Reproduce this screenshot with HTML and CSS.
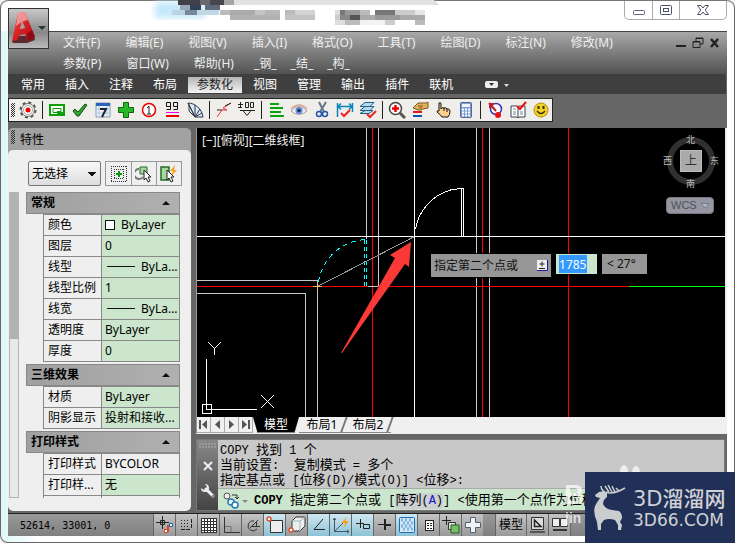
FILE: index.html
```html
<!DOCTYPE html>
<html lang="zh-CN">
<head>
<meta charset="utf-8">
<title>CAD</title>
<link rel="stylesheet" href="styles.css">
</head>
<body>
<div class="window">
  <header class="titlebar">
    <svg class="title-art" width="440" height="31" aria-hidden="true">
      <defs><filter id="soft"><feGaussianBlur stdDeviation="3"/></filter></defs>
      <rect x="155" y="2" width="50" height="16" fill="#c5e9fb" filter="url(#soft)"/>
      <rect x="178" y="0" width="256" height="5" fill="#e2e2e2"/>
      <path d="M434 0l5 5h-5z" fill="#ddd"/>
      <rect x="178" y="0" width="22" height="5" fill="#3f4048"/><rect x="200" y="0" width="10" height="5" fill="#68686e"/><rect x="210" y="0" width="14" height="5" fill="#47474d"/><rect x="224" y="0" width="10" height="5" fill="#a3a5a7"/>
      <rect x="180" y="5" width="10" height="5" fill="#9aa9b8"/><rect x="190" y="5" width="11" height="5" fill="#2f4057"/><rect x="205" y="5" width="15" height="5" fill="#5e6b7a"/>
      <rect x="172" y="10" width="13" height="5" fill="#bed3e2"/><rect x="185" y="10" width="12" height="5" fill="#77889b"/><rect x="197" y="10" width="22" height="5" fill="#c0d8e5"/>
      <rect x="220" y="10" width="10" height="5" fill="#bbb"/><rect x="230" y="10" width="25" height="5" fill="#aaa"/><rect x="255" y="10" width="10" height="5" fill="#c4c4c4"/><rect x="265" y="10" width="15" height="5" fill="#b7b7b7"/><rect x="285" y="10" width="10" height="5" fill="#bbb"/><rect x="295" y="10" width="20" height="5" fill="#d3d3d3"/>
      <rect x="230" y="15" width="50" height="5" fill="#b2b2b2"/><rect x="285" y="15" width="30" height="5" fill="#c3c3c3"/>
      <rect x="335" y="10" width="5" height="5" fill="#ddd"/><rect x="340" y="10" width="5" height="5" fill="#777"/><rect x="345" y="10" width="15" height="5" fill="#989898"/><rect x="360" y="10" width="10" height="5" fill="#bbb"/><rect x="375" y="10" width="20" height="5" fill="#777"/><rect x="395" y="10" width="20" height="5" fill="#ccc"/><rect x="415" y="10" width="10" height="5" fill="#e5e5e5"/>
      <rect x="335" y="15" width="5" height="5" fill="#ccc"/><rect x="340" y="15" width="10" height="5" fill="#888"/><rect x="350" y="15" width="10" height="5" fill="#555"/><rect x="360" y="15" width="15" height="5" fill="#aaa"/><rect x="375" y="15" width="25" height="5" fill="#999"/><rect x="400" y="15" width="25" height="5" fill="#aaa"/>
      <rect x="335" y="20" width="10" height="5" fill="#ddd"/><rect x="345" y="20" width="15" height="5" fill="#bbb"/><rect x="360" y="20" width="25" height="5" fill="#f3f3f3"/><rect x="385" y="20" width="10" height="5" fill="#ccc"/><rect x="415" y="20" width="10" height="5" fill="#bbb"/>
    </svg>
    <div class="win-controls">
      <button aria-label="最小化"><svg width="12" height="12"><rect x=".5" y="6.500" width="11" height="4" rx="1" fill="#fff" stroke="#5d6379"/></svg></button>
      <button aria-label="还原"><svg width="12" height="12"><rect x=".5" y="1.500" width="11" height="9" rx="1" fill="#fff" stroke="#4d5268"/><rect x="3.500" y="4.500" width="5" height="3" fill="#fff" stroke="#4d5268"/></svg></button>
      <button class="wide" aria-label="关闭"><svg width="12" height="12"><path d="M.5 1.500h3.500l2 2.500 2-2.500h3.500L8.200 6l3.300 4.500H8L6 8l-2 2.500H.5L3.800 6z" fill="#fff" stroke="#4d5268"/></svg></button>
    </div>
  </header>

  <button class="app-button" aria-label="应用程序菜单">
    <svg width="39" height="39">
      <defs>
        <linearGradient id="ared" x1="0" y1="0" x2="1" y2="1"><stop offset="0" stop-color="#f0605c"/><stop offset=".45" stop-color="#dd2328"/><stop offset="1" stop-color="#a30c14"/></linearGradient>
      </defs>
      <path d="M3 32l5-5 17 0 1 4-8 3-14 0z" fill="#4b0c10" opacity=".8"/>
      <path fill-rule="evenodd" d="M9 4l7-1 10 25-7 4-3-7-5 1-3 5-5 1zM13 12l-2 8 5-1z" fill="url(#ared)"/>
      <path d="M9 4l7-1 3 8q-6 1-12 6z" fill="#f5aaa6" opacity=".8"/>
      <path d="M13 12l-2 8 5-1z" fill="#a8a0a0"/>
      <path d="M19 32l7-4-3-7-5 4z" fill="#8f0a12"/>
      <path d="M29 17h8l-4 4z" fill="#2d3440"/>
    </svg>
  </button>

  <div class="app">
    <nav class="menubar">
      <div class="menus">
        <div class="menu-row"><button>文件(F)</button><button>编辑(E)</button><button>视图(V)</button><button>插入(I)</button><button>格式(O)</button><button>工具(T)</button><button>绘图(D)</button><button>标注(N)</button><button>修改(M)</button></div>
        <div class="menu-row"><button>参数(P)</button><button>窗口(W)</button><button>帮助(H)</button><div class="custom"><button>_钢_</button><button>_结_</button><button>_构_</button></div></div>
      </div>
      <div class="doc-controls">
        <button aria-label="最小化文档"><svg width="12" height="12"><path d="M1 9h10" stroke="#222" stroke-width="2"/></svg></button>
        <button aria-label="还原文档"><svg width="12" height="12"><path d="M4 4V1h7v6H8M1 4.500h7v6H1z" fill="none" stroke="#222" stroke-width="1"/><path d="M4 1.500h7M1 5h7" stroke="#222"/></svg></button>
        <button aria-label="关闭文档"><svg width="12" height="12"><path d="M2 2l7 8M9 2l-7 8" stroke="#222" stroke-width="2.500"/></svg></button>
      </div>
    </nav>

    <nav class="ribbon">
      <button>常用</button><button>插入</button><button>注释</button><button>布局</button><button class="active">参数化</button><button>视图</button><button>管理</button><button>输出</button><button>插件</button><button>联机</button>
      <button class="ribbon-more" aria-label="功能区选项"><svg width="26" height="10"><rect x="0" y="0" width="13" height="7" rx="2" fill="#eee"/><path d="M4 2h5L6.500 5z" fill="#333"/><path d="M19 3h5l-2.500 3z" fill="#ddd"/></svg></button>
    </nav>

    <div class="toolbar">
      <span class="grip"></span>
      <button aria-label="设置"><svg width="18" height="18"><circle cx="9" cy="9" r="6.500" fill="#f4f4f4" stroke="#777" stroke-width="1"/><circle cx="9" cy="9" r="7.500" fill="none" stroke="#555" stroke-width="2" stroke-dasharray="3 2.900"/><circle cx="9" cy="9" r="4.500" fill="#fff" stroke="#aaa"/><circle cx="9" cy="9" r="2.500" fill="#e00"/></svg></button>
      <i></i>
      <button aria-label="视口"><svg width="18" height="18"><path d="M2 4h14v10H2z" fill="#fff" stroke="#0ba00b" stroke-width="2"/><path d="M5 7.500h8v3H9v1H5z" fill="#fff" stroke="#0ba00b"/><path d="M9 11h7v3H9z" fill="#0ba00b"/></svg></button>
      <button aria-label="确认"><svg width="18" height="18"><path d="M2 10l2-2 3 3 7-8 2 1-8 11H6z" fill="#2fa52f" stroke="#174f17"/></svg></button>
      <button aria-label="日期"><svg width="18" height="18"><path d="M2 2h14v14H2z" fill="#e9f2fd" stroke="#89a"/><path d="M2 2h14v3H2z" fill="#2c63b8"/><path d="M2 8h14M2 12h14M5 5v11M13 5v11" stroke="#b5cde8"/><path d="M6 8h6l-4 8" fill="none" stroke="#222" stroke-width="2"/></svg></button>
      <button aria-label="添加"><svg width="18" height="18"><path d="M6.500 1.500h5v5h5v5h-5v5h-5v-5h-5v-5h5z" fill="#28b828" stroke="#0b650b"/></svg></button>
      <button aria-label="编号"><svg width="18" height="18"><circle cx="9" cy="9" r="6.500" fill="#fff" stroke="#e00" stroke-width="1.500"/><path d="M7 7l2-2v8M7 13h4" fill="none" stroke="#222"/></svg></button>
      <button aria-label="文字"><svg width="18" height="18"><path d="M7.500 1.500h-4v4h4zV8.500h-4M14.500 1.500h-4v4h4zV8.500h-4" fill="none" stroke="#111"/><path d="M3 11.500h13" stroke="#e0e"/><path d="M3 15h13" stroke="#e00" stroke-width="2"/></svg></button>
      <button aria-label="扇形"><svg width="18" height="18"><path d="M2 2c7 0 14 6 15 14H9z" fill="#d8ebf8" stroke="#334"/><path d="M2 2l7 14M9 16L9 4M9 16l5-8M9 16l7-4M3 4v6l6 6" stroke="#334" fill="none"/></svg></button>
      <i></i>
      <button aria-label="引线"><svg width="18" height="18"><path d="M2 16l5-7h5l-4-2 8-5" fill="none" stroke="#e33"/><path d="M10 5l6-3M2 9h5" stroke="#222"/></svg></button>
      <button aria-label="标高"><svg width="18" height="18"><path d="M2 9.500h15M5 9.500l4 5 4-5M2.500 1v5M0 3.500h5M0 6.500h4M7.500 1.500h3v5h-3zM12.500 1.500h3v5h-3z" fill="none" stroke="#222"/></svg></button>
      <i></i>
      <button aria-label="图层线"><svg width="18" height="18"><path d="M3 3h9M3 7h13M3 11h11M3 15h14" stroke="#09a409" stroke-width="2"/></svg></button>
      <button aria-label="显示"><svg width="18" height="18"><path d="M1 10q8-9 16 0-8 7-16 0z" fill="#eef" stroke="#b79c93"/><path d="M1 8q8-8 16 0" fill="none" stroke="#d3a898" stroke-width="1.500"/><circle cx="9" cy="9.500" r="3.500" fill="#5c8bd8"/><circle cx="9" cy="9.500" r="1.500" fill="#123"/></svg></button>
      <button aria-label="修剪"><svg width="18" height="18"><path d="M6 1l5 10M13 1L7 11" stroke="#678" stroke-width="2"/><circle cx="6" cy="13" r="2.500" fill="none" stroke="#2556ac" stroke-width="1.500"/><circle cx="12" cy="13" r="2.500" fill="none" stroke="#2556ac" stroke-width="1.500"/></svg></button>
      <button aria-label="标注检查"><svg width="18" height="18"><path d="M1.500 2v14M16.500 2v9M2 5.500h14M5 2.500l-3 3 3 3M13 2.500l3 3-3 3" fill="none" stroke="#0786bb" stroke-width="1.500"/><path d="M5 12l3 3 6-6" fill="none" stroke="#e22" stroke-width="2"/></svg></button>
      <button aria-label="图层检查"><svg width="18" height="18"><path d="M6 1.500h9l-4 4H1zM6 5.500h9l-4 4H1zM6 9.500h8l-4 3H1z" fill="#b7dbed" stroke="#23618a"/><path d="M8 13l3 3 6-6" fill="none" stroke="#e22" stroke-width="2"/></svg></button>
      <i></i>
      <button aria-label="缩放"><svg width="18" height="18"><path d="M12 12l5 5" stroke="#555" stroke-width="3"/><circle cx="7.500" cy="7.500" r="6" fill="#f5fbff" stroke="#444" stroke-width="1.500"/><path d="M7.500 4v7M4 7.500h7" stroke="#e00" stroke-width="2.500"/></svg></button>
      <button aria-label="编辑图层"><svg width="18" height="18"><path d="M2 7l5-5h8l2-1v6l-5 1-2 1H7z" fill="#e3b35c" stroke="#7b5925"/><path d="M7 5h5M8 7h3" stroke="#785a22"/><path d="M2 11h9" stroke="#e21b1b" stroke-width="2"/><path d="M2 15h9" stroke="#0756b8" stroke-width="2"/></svg></button>
      <button aria-label="平移"><svg width="18" height="18"><path d="M5 2q2-1 2 1v5q1-2 3-1 2-1 3 1 2-1 3 2 0 4-2 6H8q-1-2-5-5 0-2 2-1z" fill="#ffd08b" stroke="#111"/><path d="M10 7v3M13 8v3" stroke="#111"/></svg></button>
      <button aria-label="计算器"><svg width="18" height="18"><rect x="3.500" y="1.500" width="11" height="15" rx="1" fill="#7f9cd0" stroke="#4f6799"/><path d="M5 3h8v3H5z" fill="#edf5fa"/><path d="M5 8.500h8M5 11.500h8M5 14.500h8" stroke="#fff" stroke-width="2" stroke-dasharray="2 1"/></svg></button>
      <i></i>
      <button aria-label="轨迹"><svg width="18" height="18"><circle cx="10" cy="8" r="5.500" fill="#fff" stroke="#33b" stroke-width="1.500"/><path d="M3 2l7 8M4 7V2M3 3h5" stroke="#b22" stroke-width="2"/><circle cx="12" cy="14" r="3" fill="#e11"/></svg></button>
      <button aria-label="校对"><svg width="18" height="18"><path d="M2 5h6l1 1 1-1h6v11h-6l-1 1-1-1H2zM9 6v10" fill="#fff" stroke="#345"/><path d="M4 8h3M4 11h3M11 11h3M4 13h3M11 13h3" stroke="#789"/><path d="M8 5l3 3 6-7" fill="none" stroke="#e11" stroke-width="2"/></svg></button>
      <button aria-label="表情"><svg width="18" height="18"><circle cx="9" cy="9" r="7" fill="#f4d329" stroke="#b58b07"/><path d="M5 10q4 5 8 0" fill="none" stroke="#3d3300" stroke-width="1.500"/><path d="M6.500 5v3M11.500 5v3" stroke="#332a00" stroke-width="2"/></svg></button>
    </div>

    <main class="workspace">
      <aside class="palette">
        <header><span class="grip"></span><h2>特性</h2></header>
        <div class="palette-body">
          <div class="picker">
            <select aria-label="选择对象"><option>无选择</option></select>
            <div class="picker-tools">
              <button aria-label="切换选择"><svg width="18" height="18" shape-rendering="crispEdges"><path d="M1.500 1v16M4.500 4v10M13.500 4v10M16.500 1v16M1 1.500h16M4 4.500h10M4 13.500h10M1 16.500h16" fill="none" stroke="#333" stroke-dasharray="1 1"/><path d="M9 6v6M6 9h6" stroke="#079907" stroke-width="2"/></svg></button>
              <button aria-label="选择对象"><svg width="18" height="18"><path d="M4 4A5 5 0 1 0 8 12" fill="none" stroke="#777" stroke-width="2"/><path d="M5 2h7v7H5z" fill="#a8d6a0" stroke="#276b29"/><path d="M9 5v10l2-2 2 4 2-1-2-4h3z" fill="#fff" stroke="#222"/></svg></button>
              <button aria-label="快速选择"><svg width="18" height="18"><path d="M1 2h8v13H1z" fill="#a8d6a0" stroke="#276b29" stroke-width="1.500"/><path d="M15 0l-5 6h3l-2 5 6-6h-3z" fill="#ff9b16"/><path d="M7 5v10l2-2 2 4 2-1-2-4h3z" fill="#fff" stroke="#222"/></svg></button>
            </div>
          </div>
          <div class="property-view">
            <div class="scrollbar"><span></span></div>
            <div class="sections">
              <section><button class="section-head">常规<b></b></button>
                <table>
                  <tr><th>颜色</th><td><span class="swatch"></span>ByLayer</td></tr>
                  <tr><th>图层</th><td>0</td></tr>
                  <tr><th>线型</th><td><span class="line"></span>ByLa...</td></tr>
                  <tr><th>线型比例</th><td>1</td></tr>
                  <tr><th>线宽</th><td><span class="line"></span>ByLa...</td></tr>
                  <tr><th>透明度</th><td>ByLayer</td></tr>
                  <tr><th>厚度</th><td>0</td></tr>
                </table></section>
              <section><button class="section-head">三维效果<b></b></button>
                <table>
                  <tr><th>材质</th><td>ByLayer</td></tr>
                  <tr><th>阴影显示</th><td>投射和接收...</td></tr>
                </table></section>
              <section><button class="section-head">打印样式<b></b></button>
                <table>
                  <tr><th>打印样式</th><td class="plain">BYCOLOR</td></tr>
                  <tr><th>打印样...</th><td>无</td></tr>
                  <tr><th></th><td class="plain"></td></tr>
                </table></section>
            </div>
          </div>
        </div>
      </aside>

      <div class="document">
        <div class="viewport-frame">
          <div class="viewport">
            <svg class="drawing" width="100%" height="100%" fill="none" shape-rendering="crispEdges">
              <path d="M169.500 0V111M181.500 0V158M279.500 0V900M292.500 0V900M0 152.500H120.500V900M0 165.500H108.500V900" stroke="#c8c8c8"/>
              <path d="M175.500 0V900M285.500 0V900M371.500 0V900M0 158.500H432" stroke="#f00"/>
              <line x1="432" y1="158.500" x2="100%" y2="158.500" stroke="#0f0"/>
              <path d="M171 158.500H181" stroke="#c8c8c8"/>
              <line x1="0" y1="108.500" x2="100%" y2="108.500" stroke="#fff"/>
              <path d="M217.500 0V900M264.500 60V108M266.500 60V108M262 60.500H267M218.500 101A49 49 0 0 1 253.500 62L264 60.500" stroke="#fff"/>
              <path d="M121.500 154A50 50 0 0 1 169 111.500" stroke="#0ff" stroke-dasharray="5 4"/>
              <path d="M167.500 112V158M169.500 112V158" stroke="#0ff" stroke-dasharray="4 3"/>
              <path d="M120.500 158.500L217.500 108.500" stroke="#999"/>
              <path d="M116 158.500H125M120.500 153V163" stroke="#f3b878"/>
              <path d="M214 114L193 127 198 130 144 225 145 225 208 136 212 139z" fill="#fb3a38" shape-rendering="auto"/>
              <path d="M11 214L17.500 220.500 24 214M17.500 220V227M64 267L77 280M77 267L64 280M9.500 231V281.500H60M5.500 276.500h9v9h-9z" stroke="#fff"/>
            </svg>
            <p class="view-label">[−][俯视][二维线框]</p>
            <div class="compass">
              <svg width="50" height="50" aria-hidden="true"><circle cx="25" cy="25" r="21" fill="none" stroke="#303030" stroke-width="6"/></svg>
              <span class="north">北</span><span class="west">西</span><button>上</button><span class="east">东</span><span class="south">南</span>
            </div>
            <button class="wcs">WCS<svg width="8" height="6"><path d="M0 .5h8L4 5z" fill="#aeb8c6" stroke="#767b88"/></svg></button>
            <div class="dynamic-input">
              <label for="distance">指定第二个点或<svg width="11" height="11"><rect width="10" height="10" fill="#eee"/><path d="M10.500 0v10.500H0" fill="none" stroke="#1a1aa0"/><path d="M5 1.500v5M2.500 4h5M2 8.500h6" stroke="#222"/></svg></label>
              <span class="distance"><input id="distance" value="1785"></span>
              <output>&lt; 27°</output>
            </div>
          </div>
          <div class="layout-tabs">
            <div class="tab-nav">
              <button aria-label="首个"><svg width="9" height="9"><path d="M1 0v9" stroke="#555" stroke-width="2"/><path d="M8 0v9L3 4.500z" fill="#555"/></svg></button><button aria-label="上一个"><svg width="9" height="9"><path d="M7 0v9L2 4.500z" fill="#555"/></svg></button><button aria-label="下一个"><svg width="9" height="9"><path d="M2 0v9l5-4.500z" fill="#555"/></svg></button><button aria-label="末个"><svg width="9" height="9"><path d="M8 0v9" stroke="#555" stroke-width="2"/><path d="M1 0v9l5-4.500z" fill="#555"/></svg></button>
            </div>
            <button class="layout current">模型</button><button class="layout">布局1</button><button class="layout">布局2</button>
          </div>
        </div>

        <section class="command">
          <div class="command-side">
            <svg width="18" height="6"><path d="M0 1h18M0 4h18" stroke="#999" stroke-width="2" stroke-dasharray="2 1"/></svg>
            <button aria-label="关闭命令行"><svg width="10" height="10"><path d="M1 1l8 8M9 1L1 9" stroke="#eee" stroke-width="2"/></svg></button>
            <button aria-label="自定义"><svg width="16" height="16"><path d="M6 6l7 7" stroke="#eee" stroke-width="3" stroke-linecap="round"/><path d="M5 1a4 4 0 1 1-4 4l3 2 3-3z" fill="#eee"/><circle cx="13" cy="13" r="1" fill="#555"/></svg></button>
          </div>
          <div class="command-main">
            <div class="history">
              <p>COPY <span class="zh">找到</span> 1 <span class="zh">个</span></p>
              <p><span class="zh">当前设置</span>:&nbsp; <span class="zh">复制模式</span> = <span class="zh">多个</span></p>
              <p><span class="zh">指定基点或</span> [<span class="zh">位移</span>(D)/<span class="zh">模式</span>(O)] &lt;<span class="zh">位移</span>&gt;:</p>
            </div>
            <div class="prompt">
              <svg width="26" height="18"><circle cx="5" cy="4" r="3" fill="#eee" stroke="#555"/><path d="M10 3h5v4M13 5l2 2 2-2" fill="none" stroke="#333"/><circle cx="9" cy="10" r="3" fill="#fff" stroke="#237ab9" stroke-width="1.500"/><circle cx="13" cy="13" r="3" fill="#fff" stroke="#237ab9" stroke-width="1.500"/><path d="M20 8h6l-3 3z" fill="#888"/></svg>
              <p><strong>COPY</strong> <span class="zh">指定第二个点或</span> [<button><span class="zh">阵列</span>(<em>A</em>)</button>] &lt;<span class="zh">使用第一个点作为位移</span>&gt;:</p>
            </div>
          </div>
        </section>
      </div>
    </main>

    <footer class="status">
      <output class="coords">52614, 33001, 0</output>
      <div class="toggles">
        <button aria-label="推断约束"><svg width="18" height="18"><path d="M0 6.500h13M6.500 0v13" stroke="#222"/><path d="M4.500 4.500h4v4h-4z" fill="none" stroke="#222"/><path d="M12 16V9" stroke="#d42" stroke-width="2"/><path d="M13.500 7.500h3v3h-3z" fill="#fff" stroke="#26a"/><path d="M8.500 13.500h3v3h-3z" fill="#fff" stroke="#d42"/></svg></button>
        <button aria-label="捕捉"><svg width="18" height="18" shape-rendering="crispEdges"><path d="M3 4.500h9M3 7.500h9M3 10.500h9" stroke="#222" stroke-dasharray="1 2"/><path d="M3 13.500h9M13.500 3v10" stroke="#222" stroke-dasharray="4 1"/></svg></button>
        <button aria-label="栅格"><svg width="18" height="18" shape-rendering="crispEdges"><path d="M1 2h16v15H1z" fill="#fff"/><path d="M1.500 2v15M4.500 2v15M7.500 2v15M10.500 2v15M13.500 2v15M16.500 2v15M1 2.500h16M1 5.500h16M1 8.500h16M1 11.500h16M1 14.500h16M1 16.500h16" stroke="#333"/></svg></button>
        <button aria-label="正交"><svg width="18" height="18"><path d="M2.500 1v15.500H18" fill="none" stroke="#333"/><path d="M3 10.500h6V16" fill="none" stroke="#678"/></svg></button>
        <button aria-label="极轴"><svg width="18" height="18"><path d="M13 13A5 5 0 1 1 10 5M6 12L14 4M8 10.500h8M12.500 6v5" fill="none" stroke="#333"/></svg></button>
        <button class="on" aria-label="对象捕捉"><svg width="18" height="18"><path d="M4.500 4.500h12v12h-12z" fill="#eee" stroke="#333"/><circle cx="3" cy="3" r="2" fill="#fff" stroke="#d53" stroke-width="1.500"/></svg></button>
        <button aria-label="三维捕捉"><svg width="18" height="18"><path d="M4 5l4-4h9v9l-5 5H4z" fill="#eee" stroke="#333"/><path d="M4 5h8v10M12 5l5-4" fill="none" stroke="#9bb"/><circle cx="3" cy="14" r="2" fill="#fff" stroke="#d53" stroke-width="1.500"/></svg></button>
        <button class="on" aria-label="对象追踪"><svg width="18" height="18"><path d="M13 3L4 13.500h11" fill="none" stroke="#222"/></svg></button>
        <button class="on" aria-label="动态坐标"><svg width="18" height="18"><path d="M2.500 2v13.500H17M3 15L13 5M1 4l1.500-2L4 4M15 14l2 1.500-2 1.500" fill="none" stroke="#456"/><path d="M15 1l-6 6h4l-2 5 6-7h-4z" fill="#f5a21b"/></svg></button>
        <button class="on" aria-label="动态输入"><svg width="18" height="18"><path d="M2 7.500h8M6.500 3v9M9.500 8.500h6v4h-6z" fill="none" stroke="#222"/></svg></button>
        <button aria-label="线宽"><svg width="18" height="18"><path d="M2 8.500h6" stroke="#222"/><path d="M8 9h7M9 3v11" stroke="#222" stroke-width="2"/></svg></button>
        <button class="on" aria-label="透明度"><svg width="18" height="18"><rect x="1.500" y="1.500" width="15" height="15" rx="1" fill="#d4e8fa" stroke="#216cac"/><path d="M3 4h12M5 7h11M3 10h12M5 13h11" stroke="#7fb4e0" stroke-width="3" stroke-dasharray="2 2"/></svg></button>
        <button aria-label="快捷特性"><svg width="18" height="18" shape-rendering="crispEdges"><rect x="5.500" y="4.500" width="8" height="10" fill="#fff" stroke="#222"/><path d="M7 7.500h5M7 9.500h5M7 12.500h5" stroke="#222" stroke-dasharray="2 1"/></svg></button>
        <button aria-label="选择循环"><svg width="18" height="18"><path d="M0 4.500h9M4.500 0v9" stroke="#222"/><path d="M6.500 6.500h7v7h-7z" fill="#ddd" stroke="#333"/><path d="M9 9h8v8H9z" fill="#78be65" stroke="#255e24"/></svg></button>
        <button aria-label="注释监视"><svg width="18" height="18"><path d="M6.500 1.500h5v5h5v5h-5v5h-5v-5h-5v-5h5z" fill="#eef3f7" stroke="#536273"/></svg></button>
      </div>
      <div class="spaces">
        <button class="model">模型</button>
        <button aria-label="布局"><svg width="18" height="18"><path d="M2.500 1.500h12v12h-12z" fill="#ddd" stroke="#333"/><path d="M5.500 4v6.500h6.500z" fill="none" stroke="#222" stroke-width="1.500"/><path d="M1 16h15" stroke="#555" stroke-width="2"/></svg></button>
        <button aria-label="快速查看"><svg width="18" height="18"><path d="M1.500 2.500h7v8h-7zM9.500 2.500h7v8h-7z" fill="#eee" stroke="#333"/><path d="M2 14h14" stroke="#333" stroke-width="2"/></svg></button>
      </div>
    </footer>
  </div>
</div>

<div class="watermark">
  <svg width="26" height="22" aria-hidden="true"><ellipse cx="8" cy="9" rx="4" ry="7" fill="#fff"/><ellipse cx="20" cy="10" rx="4" ry="7" fill="#fff"/></svg>
  <span class="big">B</span><span class="small">jin</span>
</div>
<div class="brand">
  <svg width="34" height="48" viewBox="0 0 34 48" fill="#cbccd0">
    <path d="M2 11L6 8 11 7 14 9V13Q10 16 10 20 12 25 19 26L26 27Q29 29 29 34L27 38 29 41 28 46H25V41L22 36Q16 34 11 36L8 40V46H5L4 38Q-1 27 3 20L7 14 3 13z"/>
    <path d="M12 8Q8 6 8 2M13 8Q20 11 32 4M16 8L12 2M19 8L15 1M22 8L19 2M26 7L23 4" fill="none" stroke="#cbccd0" stroke-width="1.500"/>
  </svg>
  <div><strong>3D溜溜网</strong><span>3D66.COM</span></div>
</div>
</body>
</html>
```
FILE: styles.css
```css
* { box-sizing: border-box; }
body {
  margin: 0;
  position: relative;
  background: #f4f4f4;
  color: #000;
  font: 12px/16px "Noto Sans", "Noto Sans CJK SC", sans-serif;
}
button, input, select {
  font: inherit;
  color: inherit;
  border: 0;
  padding: 0;
  margin: 0;
  background: none;
}
svg { display: block; flex: none; }
p, h2 { margin: 0; white-space: nowrap; }

.window {
  position: relative;
  display: flex;
  flex-direction: column;
  min-height: calc(100vh - 1px);
  padding: 0 7px 6px;
  border: 1px solid #666;
  border-top: 0;
  border-radius: 8px;
  background: linear-gradient(90deg, #e0f8f8, #fff 40px);
}
.titlebar {
  position: relative;
  display: flex;
  justify-content: flex-end;
  height: 31px;
  margin: 0 -7px;
  padding-right: 7px;
  border-radius: 8px 8px 0 0;
  background: #fff;
  border-top: 1px solid #777;
}
.title-art { position: absolute; left: -1px; top: -1px; }
.win-controls {
  display: flex;
  height: 19px;
  border: 1px solid #aaa;
  border-top: 0;
  border-radius: 0 0 5px 5px;
}
.win-controls button { width: 27px; display: grid; place-items: center; }
.win-controls button + button { border-left: 1px solid #aaa; }
.win-controls .wide { width: 47px; }
.app-button {
  position: absolute;
  left: 7px;
  top: 8px;
  z-index: 2;
  border: 1px solid #333;
  background: linear-gradient(#c8c8c8, #888 60%, #bbb);
}

.app {
  display: flex;
  flex-direction: column;
  flex: 1;
  background: #666;
  border-top: 1px solid #444;
}
.menubar {
  display: flex;
  justify-content: space-between;
  height: 42px;
  padding: 0 6px 0 55px;
  color: #eee;
  background: linear-gradient(#a8a8a8, #525252);
}
.menu-row { display: flex; gap: 25px; height: 21px; }
.custom { display: flex; gap: 14px; margin-left: -5px; }
.doc-controls { display: flex; gap: 5px; padding-top: 4px; height: 18px; }
.ribbon {
  display: flex;
  gap: 2px;
  height: 20px;
  margin-right: 1px;
  padding: 3px 4px 1px;
  color: #fff;
  background: #3f3f3f;
}
.ribbon button { padding: 0 9px; line-height: 16px; }
.ribbon .active { color: #222; background: linear-gradient(#b5b5b5, #f4f4f4); }
.ribbon .ribbon-more { padding: 2px 0 0 21px; }

.toolbar {
  display: flex;
  align-items: center;
  align-self: flex-start;
  height: 24px;
  margin: 4px 0;
  border: 1px solid #222;
  background: #f0eeea;
}
.toolbar button { width: 23px; height: 22px; display: grid; place-items: center; }
.toolbar i { width: 1px; height: 18px; margin: 0 2px 0 3px; background: #222; }
.grip {
  width: 4px;
  height: 14px;
  margin: 0 1px 0 2px;
  background: repeating-conic-gradient(#333 0 25%, transparent 0 50%) 0 0 / 2px 2px;
}

.workspace { display: flex; flex: 1; gap: 5px; padding: 2px 0; }
.palette {
  display: flex;
  flex-direction: column;
  width: 183px;
  border-radius: 5px;
  overflow: hidden;
  background: #a2a2a2;
}
.palette header { display: flex; align-items: center; height: 22px; padding: 2px 1px 0; }
.palette header .grip { margin-bottom: 6px; }
.palette h2 { margin-left: 4px; font: inherit; }
.palette-body {
  flex: 1;
  display: flex;
  flex-direction: column;
  padding: 11px 11px 13px 1px;
  border-radius: 5px;
  background: #efefef;
}
.picker { display: flex; gap: 4px; padding-left: 19px; margin-right: -2px; }
.picker select {
  appearance: none;
  width: 74px;
  height: 25px;
  padding: 0 3px;
  border: 1px solid #777;
  border-radius: 2px;
  background:
    conic-gradient(from -45deg at 50% 100%, #111 90deg, transparent 0) right 4px top 10px / 8px 4px no-repeat,
    linear-gradient(#f8f8f8, #ddd);
  background:
    linear-gradient(to bottom left, #111 50%, transparent 51%) right 7px top 10px / 0 0 no-repeat,
    conic-gradient(from 315deg at 50% 100%, #111 90deg, transparent 0) right 4px top 10px / 8px 4px no-repeat,
    linear-gradient(#f8f8f8, #ddd);
}
.picker-tools { display: flex; border: 1px solid #999; }
.picker-tools button { width: 25px; height: 23px; display: grid; place-items: center; }
.picker-tools button + button { border-left: 1px solid #999; }
.property-view { display: flex; flex: 1; gap: 7px; margin-top: 6px; }
.scrollbar { width: 10px; border: 1px solid #b5b5b5; background: #e8e8e8; }
.scrollbar span { display: block; height: 48%; background: #b2b2b2; }
.sections { flex: 1; height: 306px; overflow: hidden; }
.sections section { margin-bottom: 2px; }
.section-head {
  display: flex;
  justify-content: space-between;
  align-items: center;
  width: 100%;
  height: 22px;
  padding: 0 9px 0 4px;
  border: 1px solid #888;
  background: linear-gradient(90deg, #a0a0a0, #b0b0b0);
  font-weight: bold;
}
.section-head b { border: 4px solid transparent; border-top: 0; border-bottom-color: #111; }
table { width: 137px; margin-left: 17px; border-collapse: collapse; table-layout: fixed; }
tr { height: 21px; }
th, td { padding: 0 0 0 3px; border: 1px solid #888; text-align: left; font-weight: normal; white-space: nowrap; line-height: 18px; }
th { width: 58px; padding-left: 4px; }
td { background: #cbe6cc; }
.plain { background: #efefef; }
.swatch { display: inline-block; width: 10px; height: 10px; margin: 0 6px 0 0; border: 1px solid #111; background: #fff; vertical-align: -1px; }
.line { display: inline-block; width: 28px; height: 1px; margin: 0 6px 0 2px; background: #111; vertical-align: 4px; }

.document { display: flex; flex-direction: column; flex: 1; min-width: 0; gap: 5px; }
.viewport-frame {
  display: flex;
  flex-direction: column;
  flex: 1;
  border: 1px solid;
  border-width: 0 2px 1px 1px;
  border-color: #999 #eee #eee #999;
}
.viewport { position: relative; flex: 1; overflow: hidden; background: #000; color: #eee; }
.drawing { position: absolute; inset: 0; }
.view-label { position: absolute; left: 5px; top: 5px; }
.compass { position: absolute; right: 9px; top: 8px; width: 50px; height: 50px; font-size: 9px; line-height: 10px; color: #bbb; }
.compass svg { position: absolute; inset: 0; }
.compass span { position: absolute; }
.north { left: 20px; top: -1px; }
.west { left: -3px; top: 20px; }
.east { right: -3px; top: 20px; }
.south { left: 20px; bottom: -3px; }
.compass button { position: absolute; left: 14px; top: 14px; width: 22px; height: 22px; background: #aaa; border: 1px solid #bbb; color: #333; font-size: 12px; }
.wcs { position: absolute; right: 11px; top: 69px; display: flex; align-items: center; justify-content: space-between; width: 48px; height: 17px; padding: 0 4px; border: 1px solid #777781; border-radius: 4px; background: #9696a2; color: #4f4f58; font: 11px/15px "Liberation Sans", sans-serif; }
.dynamic-input { position: absolute; left: 233px; top: 125px; display: flex; align-items: flex-start; gap: 3px; color: #111; }
.dynamic-input > * { border: 1px solid #000; background: #969696; }
.dynamic-input label { display: flex; align-items: center; gap: 19px; height: 25px; padding: 0 3px; white-space: nowrap; }
.dynamic-input .distance { width: 43px; height: 22px; padding: 1px 3px; background: #cbe6cc; }
.distance input { display: block; width: 28px; height: 18px; background: #3399ff; color: #fff; }
.dynamic-input output { width: 47px; height: 22px; padding: 2px 5px; }

.layout-tabs { display: flex; height: 16px; background: #f0f0f0; }
.tab-nav { display: flex; }
.tab-nav button { width: 14px; display: grid; place-items: center; border: 1px solid #aaa; border-width: 0 1px 1px 0; }
.layout { position: relative; width: 46px; line-height: 15px; border-bottom: 1px solid #888; }
.layout::after { content: ""; position: absolute; right: 0; top: 0; width: 2px; height: 15px; background: #777; transform: skewX(-20deg); }
.layout.current { color: #fff; background: #000; clip-path: polygon(0 0, 100% 0, 90% 100%, 10% 100%); }

.command { display: flex; height: 72px; margin-right: 2px; border: 1px solid #777; background: #c8c8c8; }
.command-side { display: flex; flex-direction: column; align-items: center; width: 21px; gap: 12px; padding-top: 3px; background: linear-gradient(#888, #444); }
.command-main { flex: 1; min-width: 0; display: flex; flex-direction: column; font: 12px/15px "Liberation Mono", "Noto Sans CJK SC", monospace; }
.history { flex: 1; padding: 3px 2px 0; }
.history p { height: 15px; }
.zh { font-size: 13px; }
.prompt { display: flex; align-items: center; gap: 6px; height: 22px; padding: 2px 0 0 4px; overflow: hidden; border-top: 1px solid #aaa; background: #cbe6cc; }
.prompt button { border-radius: 3px; background: #ccd0d0; }
.prompt em { font-style: normal; color: #11c; }

.status { display: flex; height: 23px; border-top: 1px solid #222; background: linear-gradient(#999, #808080); }
.coords { width: 145px; padding-left: 12px; font: 10px/24px "DejaVu Sans Mono", monospace; }
.toggles, .spaces { display: flex; }
.status button { width: 22px; height: 22px; display: grid; place-items: center; border-left: 1px solid #666; background: linear-gradient(#c4c4c4, #999); }
.status .on { background: linear-gradient(#cfe8f0, #8cc2d6); }
.spaces { margin-left: 12px; border-right: 1px solid #666; }
.status .model { width: 31px; }

.watermark { position: absolute; right: 93px; bottom: 0; width: 78px; height: 80px; opacity: .7; color: #fff; }
.watermark svg { position: absolute; right: 0; top: 0; }
.watermark .big { position: absolute; left: 0; top: 16px; font: bold 28px/32px "Liberation Sans", sans-serif; }
.watermark .small { position: absolute; left: 1px; top: 47px; font: bold 14px/16px "Liberation Sans", sans-serif; }
.brand { position: absolute; right: 0; bottom: 0; display: flex; align-items: center; gap: 6px; width: 150px; height: 71px; padding-left: 8px; background: #213056; color: #d0d1d5; }
.brand div { display: flex; flex-direction: column; }
.brand strong { font: 500 21px/24px "DejaVu Sans", "Noto Sans CJK SC", sans-serif; white-space: nowrap; }
.brand span { font: 17px/18px "DejaVu Sans", sans-serif; }
```
